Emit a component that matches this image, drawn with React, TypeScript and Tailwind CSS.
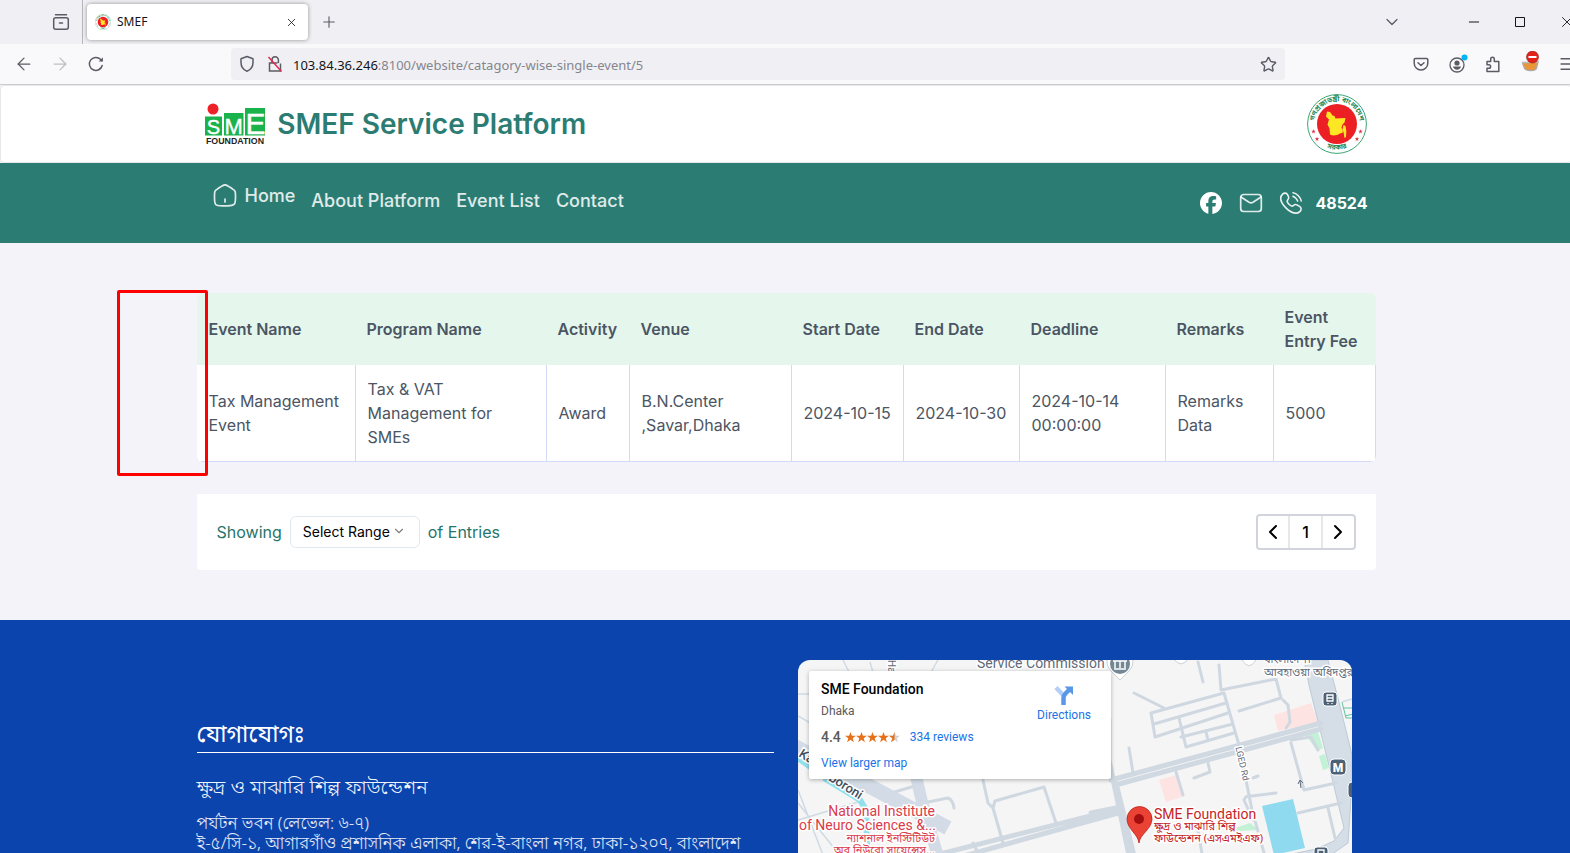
import type { ReactNode } from "react"
import { ArrowLeft, ArrowRight, ChevronDown, ChevronLeft, ChevronRight, Menu, Minus, Plus, Square, Star, X } from "lucide-react"

const columns = [
  { label: "Event Name", width: "w-[158px]" },
  { label: "Program Name", width: "w-[191px]" },
  { label: "Activity", width: "w-[83px]" },
  { label: "Venue", width: "w-[162px]" },
  { label: "Start Date", width: "w-[112px]" },
  { label: "End Date", width: "w-[116px]" },
  { label: "Deadline", width: "w-[146px]" },
  { label: "Remarks", width: "w-[108px]" },
  { label: "Event Entry Fee", width: "w-[103px]" },
]

const events = [
  {
    name: "Tax Management Event",
    program: "Tax & VAT Management for SMEs",
    activity: "Award",
    venue: "B.N.Center ,Savar,Dhaka",
    start: "2024-10-15",
    end: "2024-10-30",
    deadline: "2024-10-14 00:00:00",
    remarks: "Remarks Data",
    fee: "5000",
  },
]

const bengali = "font-['Noto_Sans_Bengali','Noto_Sans',sans-serif]"

// Government seal, also used as the tab icon
function Emblem({ className }: { className: string }): ReactNode {
  return (
    <svg viewBox="0 0 60 60" className={className} role="img" aria-label="Government emblem">
      <defs>
        <path id="emblem-top" d="M7.500 33a22.700 22.700 0 1 1 45 0" />
        <path id="emblem-bottom" d="M7.700 43a26 26 0 0 0 44.600 0" />
      </defs>
      <circle cx="30" cy="30" r="29.400" fill="#fff" stroke="#3aa574" strokeWidth="1" />
      <circle cx="30" cy="30" r="20" fill="#ec2024" />
      <path d="M20 17.500l3 .5 2.500 3.500 2 .5 1 2.500 10-.5-1 4.500-2 2-1 3 1.500 5-3 1-3 1.500-4 .5-3-1-.5-6-2-4 1.500-5-3-3zM36.500 31l2 1 .8 5-.3 6-1.500 1-1-6-1.200-2z" fill="#fde725" />
      <g fill="#1c8a57" fontSize="7" fontWeight="700" textAnchor="middle" className={bengali}>
        <text><textPath href="#emblem-top" startOffset="50%">গণপ্রজাতন্ত্রী বাংলাদেশ</textPath></text>
        <text><textPath href="#emblem-bottom" startOffset="50%">সরকার</textPath></text>
      </g>
      <g fill="#e2334a">
        {[[6.5, 37.5], [10, 45], [50, 45], [53.5, 37.5]].map(([x, y]) => (
          <path key={x} transform={`translate(${x} ${y})`} d="M0-2.200l.6 1.500h1.600l-1.300 1 .5 1.600-1.400-1-1.400 1 .5-1.600-1.300-1h1.600z" />
        ))}
      </g>
    </svg>
  )
}

function SmeLogo(): ReactNode {
  return (
    <svg viewBox="0 0 60 42" className="h-[42px] w-[60px]" role="img" aria-label="SME Foundation">
      <circle cx="8" cy="6" r="5.500" fill="#ee2028" />
      <rect y="13.500" width="17" height="19" fill="#19b24b" />
      <rect x="19" y="10" width="19.500" height="22.500" fill="#19b24b" />
      <rect x="40" y="5" width="20" height="27.500" fill="#19b24b" />
      <g fill="#fff" stroke="#fff" strokeWidth=".4" fontFamily="Liberation Sans, sans-serif" textAnchor="middle">
        <text x="8.500" y="30.500" fontSize="20">S</text>
        <text x="28.700" y="30.500" fontSize="22">M</text>
        <text x="50.500" y="30.500" fontSize="30">E</text>
      </g>
      <text x="30" y="41" fontSize="8.800" fontWeight="700" fill="#231f20" fontFamily="Liberation Sans, sans-serif" textAnchor="middle">FOUNDATION</text>
    </svg>
  )
}

function BrowserChrome(): ReactNode {
  return (
    <div className="border-b border-[#cccccf] font-['Noto_Sans','Open_Sans',sans-serif] text-[#5b5b66]">
      <div className="flex h-11 bg-[#f0f0f4]">
        <div className="flex w-[83px] items-center justify-end border-r border-[#b5b5bc] pr-3">
          <button type="button" aria-label="Recent browsing">
            <svg viewBox="0 0 18 18" className="size-[18px]" fill="none" stroke="currentColor" strokeWidth="1.500" strokeLinecap="round">
              <path d="M3.500 1.700h11M7.500 10h3" />
              <rect x="1.700" y="4.700" width="14.600" height="11.600" rx="2" />
            </svg>
          </button>
        </div>
        <div className="my-1 ml-1 flex w-[221px] items-center rounded bg-white pr-2.5 pl-2 shadow-[0_0_4px_rgba(0,0,0,0.4)]">
          <Emblem className="size-4" />
          <span className="ml-1.5 flex-1 text-xs text-[#15141a]">SMEF</span>
          <button type="button" aria-label="Close tab"><X className="size-[13px] text-[#15141a]" strokeWidth={1.5} /></button>
        </div>
        <button type="button" aria-label="New tab" className="ml-3"><Plus className="size-[18px]" strokeWidth={1.5} /></button>
        <div className="-mr-1 ml-auto flex items-center text-[#15141a]">
          <button type="button" aria-label="List all tabs"><ChevronDown className="size-5 text-[#5b5b66]" strokeWidth={1.5} /></button>
          <button type="button" aria-label="Minimize" className="ml-16"><Minus className="size-4" strokeWidth={1.5} /></button>
          <button type="button" aria-label="Maximize" className="ml-8">
            <svg viewBox="0 0 12 12" className="size-3" fill="none" stroke="currentColor"><path d="M1.500 1.500h9v9h-9z" /></svg>
          </button>
          <button type="button" aria-label="Close" className="ml-8"><X className="size-[18px]" strokeWidth={1.2} /></button>
        </div>
      </div>
      <div className="flex h-10 items-center bg-[#f9f9fb]">
        <button type="button" aria-label="Back" className="ml-3.5"><ArrowLeft className="size-5" strokeWidth={1.5} /></button>
        <button type="button" aria-label="Forward" className="ml-4 text-[#bdbdc3]"><ArrowRight className="size-5" strokeWidth={1.5} /></button>
        <button type="button" aria-label="Reload" className="ml-[18px]">
          <svg viewBox="0 0 16 16" className="size-4" fill="none" stroke="currentColor" strokeWidth="1.500" strokeLinecap="round">
            <path d="M14.200 9.500A6.500 6.500 0 1 1 12.500 3.300L14 4.600" />
            <path d="M14.900 1.300v4.200h-4.200z" fill="currentColor" stroke="none" />
          </svg>
        </button>
        <div className="ml-[127px] flex h-8 w-[1054px] items-center rounded bg-[#f0f0f4] px-2">
          <svg viewBox="0 0 16 18" className="h-[18px] w-4" fill="none" stroke="currentColor" strokeWidth="1.500" strokeLinejoin="round">
            <path d="M8 1.500l6 2.200v3.800c0 4-2.200 7.200-6 8.700-3.800-1.500-6-4.700-6-8.700V3.700z" />
          </svg>
          <svg viewBox="0 0 16 18" className="ml-3 h-[18px] w-4" fill="none" stroke="currentColor" strokeWidth="1.500">
            <path d="M5 8V5a3.200 3.200 0 0 1 6.400 0v3M13.500 8.500v7.500H2.500V8h8" />
            <path d="M1.500 2l13 14.500" stroke="#e22850" />
          </svg>
          <div className="mt-0.5 ml-2.5 flex-1 text-[13px] leading-6 text-[#85858e]">
            <span className="text-[#15141a]">103.84.36.246</span>:8100/website/catagory-wise-single-event/5
          </div>
          <button type="button" aria-label="Bookmark"><Star className="size-[17px]" strokeWidth={2} /></button>
        </div>
        <div className="-mr-1 ml-auto flex items-center">
          <button type="button" aria-label="Save to Pocket">
            <svg viewBox="0 0 16 16" className="size-4" fill="none" stroke="currentColor" strokeWidth="1.500" strokeLinecap="round" strokeLinejoin="round">
              <path d="M2.500 2.500h11a1.300 1.300 0 0 1 1.300 1.300v3.400a6.800 6.800 0 0 1-13.600 0V3.800a1.300 1.300 0 0 1 1.300-1.300zM5 6.800l3 2.700 3-2.700" />
            </svg>
          </button>
          <button type="button" aria-label="Account" className="ml-5">
            <svg viewBox="0 0 19 20" className="h-5 w-[19px]">
              <circle cx="8" cy="11" r="7" fill="none" stroke="currentColor" strokeWidth="1.300" />
              <circle cx="8" cy="9" r="2.600" fill="currentColor" />
              <path d="M4 12.500h8c-.4 2-2 3.200-4 3.200s-3.600-1.200-4-3.200z" fill="currentColor" />
              <circle cx="15.500" cy="3.500" r="3" fill="#00b3f4" />
            </svg>
          </button>
          <button type="button" aria-label="Extensions" className="ml-[17px]">
            <svg viewBox="0 0 16 18" className="h-[18px] w-4" fill="none" stroke="currentColor" strokeWidth="1.500" strokeLinejoin="round">
              <path d="M2 6.500h3.700V4a1.800 1.800 0 0 1 3.600 0v2.500h4.500v10H2v-3.200h1.800a1.800 1.800 0 0 0 0-3.600H2z" />
            </svg>
          </button>
          <button type="button" aria-label="Cookie blocker" className="ml-5 pb-1">
            <svg viewBox="0 0 20 22" className="h-[22px] w-5">
              <path d="M1.500 12l15.500-1-1.500 6.500c-1 2.500-10 3-12 0z" fill="#e9963a" stroke="#a9a9a9" strokeWidth="1.200" />
              <path d="M1 11.500l17-1" stroke="#bdbdbd" strokeWidth="1.500" />
              <circle cx="11.500" cy="6" r="6" fill="#e3231a" stroke="#8d1a12" strokeWidth=".6" />
              <path d="M7.500 6h8" stroke="#fff" strokeWidth="2" />
            </svg>
          </button>
          <button type="button" aria-label="Menu" className="ml-[17px]"><Menu className="size-[18px]" strokeWidth={1.7} /></button>
        </div>
      </div>
    </div>
  )
}

function SiteHeader(): ReactNode {
  return (
    <header>
      <div className="rounded border border-[#e5e7eb] bg-white">
        <div className="mx-auto flex h-[76px] w-3/4 items-center justify-between px-2">
          <div className="flex items-center gap-3">
            <SmeLogo />
            <h1 className="text-[28px] font-semibold text-[#2b7c72]">SMEF Service Platform</h1>
          </div>
          <Emblem className="size-[60px]" />
        </div>
      </div>
      <div className="bg-[#2b7c72] text-white">
        <nav className="mx-auto flex h-20 w-3/4 items-center justify-between pr-2 pl-4 text-lg font-medium">
          <div className="flex items-center gap-4 pb-1 text-white/85">
            <a href="#home" className="flex items-center gap-2 pb-2.5">
              <svg viewBox="0 0 24 24" className="size-6" fill="none" stroke="currentColor" strokeWidth="1.700" strokeLinecap="round">
                <path d="M12 15v3" />
                <path d="M1.500 11.500c0-2.300 0-3.400.5-4.400s1.500-1.600 3.400-2.800l2-1.300C9.600 1.600 10.700.8 12 .8s2.400.8 4.600 2.200l2 1.300c1.900 1.200 2.900 1.800 3.400 2.800s.5 2.100.5 4.400v1.500c0 4 0 6-1.200 7.200S18.200 21.800 14.500 21.800h-5c-3.700 0-5.600 0-6.800-1.300S1.500 17 1.500 13z" />
              </svg>
              Home
            </a>
            <a href="#about">About Platform</a>
            <a href="#events">Event List</a>
            <a href="#contact">Contact</a>
          </div>
          <div className="flex items-center gap-4">
            <a href="#facebook" aria-label="Facebook">
              <svg viewBox="0 0 24 24" className="size-6" fill="currentColor">
                <path d="M23 12.070C23 5.950 18.070 1 12 1S1 5.950 1 12.070c0 5.190 3.560 9.550 8.360 10.750v-7.360H7.090v-3.390h2.270v-1.450c0-3.770 1.700-5.520 5.380-5.520.7 0 1.900.14 2.390.27v3.070a14 14 0 0 0-1.270-.04c-1.810 0-2.510.69-2.510 2.480v1.190h3.610l-.62 3.390h-2.990V23C18.820 22.330 23 17.690 23 12.070z" />
              </svg>
            </a>
            <a href="#mail" aria-label="Email" className="text-white/85">
              <svg viewBox="0 0 24 24" className="size-6" fill="none" stroke="currentColor" strokeWidth="1.700" strokeLinecap="round">
                <rect x="1.700" y="3.500" width="20.600" height="17" rx="3" />
                <path d="M2 6l8 5.200c1.500.9 2.500.9 4 0L22 6" />
              </svg>
            </a>
            <a href="tel:48524" className="flex items-center gap-3 text-base font-bold">
              <svg viewBox="0 0 24 24" className="size-6 text-white/90" fill="none" stroke="currentColor" strokeWidth="1.600" strokeLinecap="round" strokeLinejoin="round">
                <path d="M14 1.800s2.600.2 5.300 2.900S22.200 10 22.200 10M14 5.400s1.300.3 2.800 1.800 1.800 2.800 1.800 2.800" />
                <path d="M8.500 4.400l.9 1.700c.7 1.200.4 2.500-.6 3.500-1.100 1.100-.6 2.600 1.200 4.400s3.300 2.300 4.400 1.200c1-1 2.300-1.300 3.500-.6l2.600 1.500c1.900 1.100 2.200 3.400.6 5-1 1-2.200 1.700-3.500 1.700-2.500.1-6.500-1-10.200-4.700S1.600 10.400 1.700 7.900c0-1.600.7-3 1.900-4.100 1.600-1.500 3.900-1.300 4.900.6z" transform="translate(0 -.7)" />
              </svg>
              48524
            </a>
          </div>
        </nav>
      </div>
    </header>
  )
}

function EventTable(): ReactNode {
  return (
    <div className="relative">
      <table className="w-full table-fixed border-separate border-spacing-0 overflow-hidden rounded-md text-left text-base text-[#4b5563]">
        <thead>
          <tr className="bg-[#e5f7ed]">
            {columns.map((column) => (
              <th key={column.label} scope="col" className={`${column.width} p-3 font-semibold`}>{column.label}</th>
            ))}
          </tr>
        </thead>
        <tbody>
          {events.map((event) => (
            <tr key={event.name} className="bg-white">
              {Object.entries(event).map(([key, value]) => (
                <td
                  key={key}
                  className={`border-b border-l border-[#d3d9f8] py-3 pl-3 first:border-l-0 last:border-r ${key === "start" || key === "end" ? "whitespace-nowrap" : "pr-3"}`}
                >
                  {value}
                </td>
              ))}
            </tr>
          ))}
        </tbody>
      </table>
      {/* marker over the left edge of the table */}
      <div className="absolute -top-[3px] -left-20 h-[186px] w-[91px] rounded-xs border-3 border-[#ff0000]" />
    </div>
  )
}

function TableFooter(): ReactNode {
  return (
    <div className="mt-8 flex items-center justify-between rounded-b bg-white p-5">
      <div className="flex items-center gap-2 text-[#26746a]">
        <label htmlFor="range">Showing</label>
        <div className="relative">
          <select id="range" className="h-8 w-[130px] appearance-none rounded-md border border-[#e2e8f0] bg-white pl-3 text-sm text-black">
            <option>Select Range</option>
          </select>
          <ChevronDown className="pointer-events-none absolute top-2 right-3.5 size-3.5 text-[#808080]" strokeWidth={2} />
        </div>
        <span>of Entries</span>
      </div>
      <div className="flex h-9 w-[100px] divide-x-2 divide-[#e5e7eb] rounded border-2 border-[#d1d5db] text-black">
        <button type="button" aria-label="Previous page" className="flex flex-1 items-center justify-center"><ChevronLeft className="size-6" /></button>
        <button type="button" className="flex-1 font-medium">1</button>
        <button type="button" aria-label="Next page" className="flex flex-1 items-center justify-center"><ChevronRight className="size-6" /></button>
      </div>
    </div>
  )
}

function MapCanvas(): ReactNode {
  return (
    <svg viewBox="0 0 554 300" preserveAspectRatio="xMinYMin slice" className="h-[300px] w-full" fontFamily="Roboto, sans-serif">
      <rect width="554" height="300" fill="#f5f5f5" />
      <path d="M476 55l37-12 7 19-40 9zM361 120l17-5 6 22-16 5z" fill="#fde4e2" />
      <path d="M437 168l15-5 9 7-22 1z" fill="#c3f1d5" />
      <path d="M464 146l31-7 12 49-31 7z" fill="#8fdaee" />
      <path d="M544 42l4 16h8M547 56l8-2M545 48h9" fill="none" stroke="#62c59d" />
      <path d="M506 0h24l13 50 11 45v28l-4 60-20 14h-40l-20 8v-6l48-10 18-8 10-13-12-50-23-93z" fill="#d5dee7" stroke="#bccad6" />
      <path d="M508 75l12-3 5 16-6 3zM521 96l6-2 4 14-6 2z" fill="#c3f1d5" />
      <g fill="none" stroke="#d0d9e1" strokeWidth="5" strokeLinecap="round" strokeLinejoin="round">
        <path d="M313 120l210-57M321 124l202-55M130 197l190-48M130 206l190-53M293 153l25-5" />
        <path d="M311 60v40l21 100M318 123l19 77" />
      </g>
      <g fill="none" stroke="#cfd8e1" strokeWidth="3" strokeLinecap="round" strokeLinejoin="round">
        <path d="M336 33l30 15M353 53l73-20 15 52 13 65 14 50M353 53l4 24 73-24M356 64l72-21M381 58l7 29 48-14M383 77l52-13M408 72l2 8" />
        <path d="M421 5l2 25 55-11 5 19-42 13M485 40l5 5 2 17-4 6M400 2l5 20M331 88l4 25M410 103l2 9-16 6M378 112l7 23" />
        <path d="M493 83l13 47 32-7M493 80l20-3 7 13M500 153l43-10M530 148l7 30M446 140q2-5 8-4l24-3M446 140l9 20M455 118l5-2M400 170l5 30" />
        <path d="M130 142l20-4q5 2 6 10M185 120l5 23 5 5 10 35M195 148l2-7 49-14 12 36M175 183l6 12M80 137l40-12" />
      </g>
      <g fill="none" stroke="#cfdae4" strokeWidth="1.500">
        <path d="M0 34h12M0 56l14 8M45 0l8 16M72 2l4 14 16-4M140 0l-8 14M0 130l25 65M0 143l40 50M0 160l60-18M544 42l10-3" />
      </g>
      <path d="M-4 86L150 168" stroke="#d3dce6" strokeWidth="15" />
      <path d="M112 90l12 52 17 58" fill="none" stroke="#d3dce6" strokeWidth="12" />
      <path d="M0 98l14 10M26 118l36 22 6 10 2 60" fill="none" stroke="#92e0ec" strokeWidth="6" />
      <g fill="#5f6b7a" stroke="#fff" strokeWidth="3" paintOrder="stroke">
        <text x="179" y="8" fontSize="14">Service Commission</text>
        <text x="90" y="0" fontSize="10" transform="rotate(90 90 0)">Ha</text>
        <text x="425" y="103" fontSize="9" transform="rotate(77 441 103)">LGED Rd</text>
        <g fontSize="11" className={bengali}>
          <text x="466" y="3">বাংলাদেশ।</text>
          <text x="466" y="16">আবহাওয়া অধিদপ্তর</text>
        </g>
      </g>
      <g fill="#434f5e" stroke="#fff" strokeWidth="3" paintOrder="stroke" fontSize="13" fontWeight="500">
        <text x="0" y="96" transform="rotate(32 0 96)">Kazi</text>
        <text x="30" y="120" transform="rotate(32 30 120)">boroni</text>
      </g>
      <g fill="#d93b4b" stroke="#fff" strokeWidth="3" paintOrder="stroke" textAnchor="end">
        <text x="137" y="156" fontSize="14">National Institute</text>
        <text x="138" y="170" fontSize="14">of Neuro Sciences &amp;...</text>
        <g fontSize="11" className={bengali}>
          <text x="137" y="182">ন্যাশনাল ইনস্টিটিউট</text>
          <text x="137" y="194">অব নিউরো সায়েন্সেস...</text>
        </g>
      </g>
      <g fill="#fff" stroke="#c9d0d6">
        <path d="M375-4q1 6 8 8 7-2 8-8zM443-4q1 7 8 10 7-3 8-10z" />
        <path d="M322 20l-9-9a13 13 0 1 1 18 0z" />
      </g>
      <circle cx="322" cy="4" r="10" fill="#738794" />
      <path d="M315 1h14M317 1v7M322 1v7M327 1v7M316 9h12" stroke="#fff" strokeWidth="1.500" />
      <g fill="#4c6175" stroke="#fff">
        <rect x="525" y="32" width="14" height="14" rx="3" />
        <rect x="532" y="99" width="16" height="16" rx="4" />
        <rect x="550" y="122" width="14" height="16" rx="4" />
        <rect x="516" y="187" width="14" height="14" rx="3" />
      </g>
      <path d="M529 35h6v6h-6zM529 38h6M530 43v1M534 43v1M520 190h6v6h-6z" fill="none" stroke="#fff" strokeWidth="1.300" />
      <text x="540" y="111.500" fontSize="12" fontWeight="900" textAnchor="middle" fill="#fff">M</text>
      <path d="M503 128l-1-7m-2 3l2-4 3 3" fill="none" stroke="#5f6b7a" />
      <path d="M341 183c-1-9-12-14-12-24a12.500 12.500 0 0 1 25 0c0 10-12 15-13 24z" fill="#ea4335" stroke="#b31412" strokeWidth=".7" />
      <circle cx="341" cy="159" r="5" fill="#a50e0e" />
      <g fill="#c5221f" stroke="#fff" strokeWidth="3" paintOrder="stroke">
        <text x="356" y="159" fontSize="14">SME Foundation</text>
        <g fontSize="11" className={bengali}>
          <text x="356" y="170">ক্ষুদ্র ও মাঝারি শিল্প</text>
          <text x="356" y="182">ফাউন্ডেশন (এসএমইএফ)</text>
        </g>
      </g>
    </svg>
  )
}

function StarRating(): ReactNode {
  const star = "M5.500 0l1.400 3.800h4L7.700 6.200l1.200 4-3.400-2.400-3.400 2.400 1.200-4L0 3.800h4.100z"
  return (
    <svg viewBox="0 0 55 11" className="ml-1 h-[11px] w-[55px]" role="img" aria-label="4.4 stars">
      {[0, 11, 22, 33].map((x) => <path key={x} d={star} fill="#e7711b" transform={`translate(${x} 0)`} />)}
      <path d={star} fill="#d0d0d0" transform="translate(44 0)" />
      <path d="M49.500 0v7.800l-3.400 2.400 1.200-4L44 3.800h4.100z" fill="#e7711b" />
    </svg>
  )
}

function MapCard(): ReactNode {
  return (
    <div className="relative mr-6 overflow-hidden rounded-xl font-['Roboto',sans-serif]">
      <MapCanvas />
      <div className="absolute top-[11px] left-[11px] flex w-[302px] justify-between rounded-xs bg-white px-3 pt-2.5 pb-2 text-xs shadow-[0_1px_4px_rgba(0,0,0,0.3)]">
        <div>
          <p className="text-sm leading-4 font-medium text-black">SME Foundation</p>
          <p className="mt-1.5 leading-4 text-[#5b5b5b]">Dhaka</p>
          <div className="mt-2.5 flex items-center leading-4">
            <span className="text-sm leading-4 font-medium text-[#5b5b5b]">4.4</span>
            <StarRating />
            <a href="#reviews" className="ml-2.5 text-[#1a73e8]">334 reviews</a>
          </div>
          <a href="#map" className="mt-2.5 block leading-4 text-[#1a73e8]">View larger map</a>
        </div>
        <a href="#directions" className="mt-1 mr-2 flex flex-col items-center text-[#1a73e8]">
          <svg viewBox="0 0 20 20" className="size-5" fill="none">
            <path d="M2 2.500l7 7.500" stroke="#b3cff7" strokeWidth="4.500" />
            <path d="M9.500 20v-7q0-2.500 2-4.500l4-4" stroke="#5a97e8" strokeWidth="4.500" />
            <path d="M10.500 1.500H19V10z" fill="#5a97e8" />
          </svg>
          <span className="mt-0.5">Directions</span>
        </a>
      </div>
    </div>
  )
}

function SiteFooter(): ReactNode {
  return (
    <footer className="bg-[#0c44ae] pt-10 pb-10 text-white">
      <div className="mx-auto grid w-3/4 grid-cols-2 gap-6">
        <div className={`pt-[60px] ${bengali}`}>
          <h2 className="border-b border-white text-2xl leading-8">যোগাযোগঃ</h2>
          <p className="mt-[22px] text-xl leading-7 font-light text-white/95">ক্ষুদ্র ও মাঝারি শিল্প ফাউন্ডেশন</p>
          <p className="mt-3 text-[17px] leading-5 font-light whitespace-nowrap text-white/90">
            পর্যটন ভবন (লেভেল: ৬-৭)
            <br />
            ই-৫/সি-১, আগারগাঁও প্রশাসনিক এলাকা, শের-ই-বাংলা নগর, ঢাকা-১২০৭, বাংলাদেশ
          </p>
        </div>
        <MapCard />
      </div>
    </footer>
  )
}

export default function App(): ReactNode {
  return (
    <div className="h-screen overflow-hidden bg-[#f3f3f9] font-['Inter',sans-serif]">
      {/* the window runs slightly past the right edge of the screen */}
      <div className="-mr-0.5">
        <BrowserChrome />
        <SiteHeader />
        <main className="mx-auto w-3/4 py-[50px]">
          <EventTable />
          <TableFooter />
        </main>
        <SiteFooter />
      </div>
    </div>
  )
}
